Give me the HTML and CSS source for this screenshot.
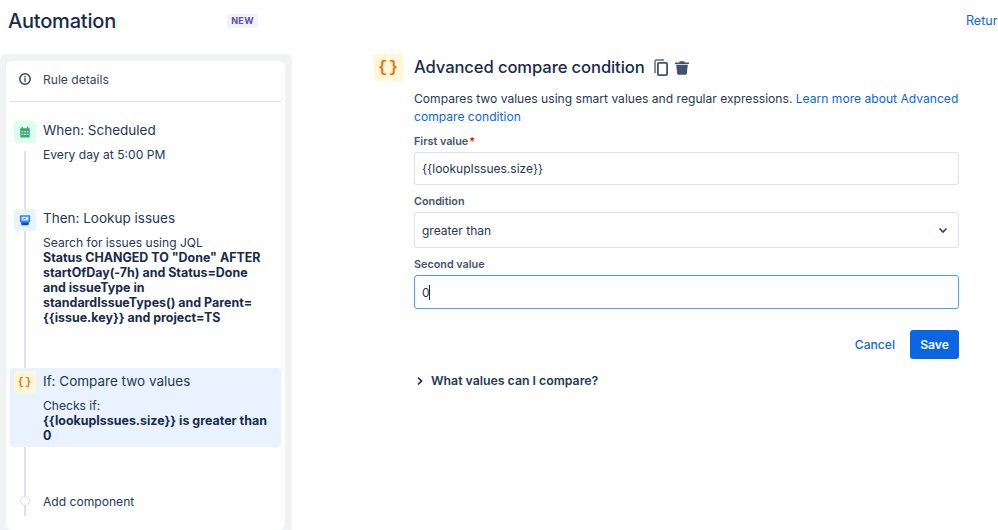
FILE: index.html
```html
<!DOCTYPE html>
<html lang="en">
<head>
<meta charset="utf-8">
<title>Automation</title>
<link rel="stylesheet" href="styles.css">
</head>
<body>
<div class="page">
  <header class="topbar">
    <h1 class="title">Automation</h1>
    <span class="badge">NEW</span>
    <a class="return-link">Return to list</a>
  </header>
  <div class="columns">
    <aside class="panel">
      <div class="card">
        <div class="details">
          <svg class="info" viewBox="0 0 14 14"><circle cx="7" cy="7" r="5.2" fill="none" stroke="#344563" stroke-width="1.5"/><rect x="6.3" y="6.2" width="1.4" height="3.6" fill="#344563"/><rect x="6.3" y="4" width="1.4" height="1.4" fill="#344563"/></svg>
          <span>Rule details</span>
        </div>
        <div class="steps">
          <span class="connector"></span>
          <div class="step step-when">
            <span class="tile tile-green">
              <svg viewBox="0 0 14 14" class="tile-icon"><path d="M1.500 2.500h11v10a1 1 0 0 1-1 1h-9a1 1 0 0 1-1-1z" fill="#36a876"/><rect x="3" y="1" width="1.600" height="2" fill="#36a876"/><rect x="9.400" y="1" width="1.600" height="2" fill="#36a876"/><path d="M3 6h2v1.400H3zM6 6h2v1.400H6zM9 6h2v1.400H9zM3 9h2v1.400H3zM6 9h2v1.400H6zM9 9h2v1.400H9z" fill="#d8f5e6"/></svg>
            </span>
            <div class="step-body">
              <div class="step-title">When: Scheduled</div>
              <div class="step-text">Every day at 5:00 PM</div>
            </div>
          </div>
          <div class="step step-then">
            <span class="tile tile-blue">
              <svg viewBox="0 0 14 14" class="tile-icon"><rect x="1" y="1.500" width="12" height="8" rx="1" fill="#2684ff"/><rect x="3" y="3.200" width="8" height="4.400" fill="#deebff"/><path d="M4.500 6l4-1.500" stroke="#2684ff" stroke-width="1"/><path d="M2.200 9.500h9.600L11 13H3z" fill="#0052cc"/></svg>
            </span>
            <div class="step-body">
              <div class="step-title">Then: Lookup issues</div>
              <div class="step-text">Search for issues using JQL<br><strong>Status CHANGED TO "Done" AFTER startOfDay(-7h) and Status=Done and issueType in standardIssueTypes() and Parent= {{issue.key}} and project=TS</strong></div>
            </div>
          </div>
          <div class="step step-if">
            <span class="tile tile-yellow tile-braces">{}</span>
            <div class="step-body">
              <div class="step-title">If: Compare two values</div>
              <div class="step-text">Checks if:<br><strong>{{lookupIssues.size}} is greater than 0</strong></div>
            </div>
          </div>
          <div class="step step-add">
            <span class="dot"></span>
            <span class="add-label">Add component</span>
          </div>
        </div>
      </div>
    </aside>
    <main class="content">
      <div class="heading">
        <span class="big-tile">{}</span>
        <h2 class="heading-text">Advanced compare condition</h2>
        <svg class="act act-copy" viewBox="0 0 14 17"><path d="M1 14V2.500A1.500 1.500 0 0 1 2.500 1H10" fill="none" stroke="#5e6c84" stroke-width="1.500"/><rect x="3.900" y="3.900" width="9.200" height="12.200" rx="1" fill="none" stroke="#42526e" stroke-width="1.800"/></svg>
        <svg class="act act-trash" viewBox="0 0 14 14"><path d="M0 1.600h14v1.400H0zM4.500 .3h5v1.300h-5z" fill="#42526e"/><path d="M1.200 3.800h11.600l-1 9a1.200 1.200 0 0 1-1.200 1H3.400a1.200 1.200 0 0 1-1.200-1z" fill="#42526e"/></svg>
      </div>
      <p class="desc">Compares two values using smart values and regular expressions. <a class="link">Learn more about Advanced compare condition</a></p>
      <label class="field-label label-first">First value<span class="req">*</span></label>
      <div class="input">{{lookupIssues.size}}</div>
      <label class="field-label">Condition</label>
      <div class="input select"><span>greater than</span>
        <svg class="chev" viewBox="0 0 10 10"><path d="M1.500 3.500L5 7l3.500-3.500" fill="none" stroke="#344563" stroke-width="1.700"/></svg>
      </div>
      <label class="field-label">Second value</label>
      <div class="input focused"><span>0</span><span class="caret"></span></div>
      <div class="actions">
        <a class="cancel">Cancel</a>
        <button class="save" type="button">Save</button>
      </div>
      <div class="expander">
        <svg class="expander-icon" viewBox="0 0 10 10"><path d="M3 1.500L6.500 5 3 8.500" fill="none" stroke="#172b4d" stroke-width="1.700"/></svg>
        <span>What values can I compare?</span>
      </div>
    </main>
  </div>
</div>
</body>
</html>
```
FILE: styles.css
```css
* { box-sizing: border-box; }
html, body { margin: 0; height: 100%; overflow: hidden; background: #fff; }
body { font-family: Inter, "Liberation Sans", sans-serif; color: #172b4d; font-size: 12.100px; }
.page { width: 998px; height: 530px; display: flex; flex-direction: column; overflow: hidden; }
.topbar { height: 54px; flex: none; display: flex; align-items: flex-start; padding: 8px 0 0 8px; white-space: nowrap; overflow: hidden; }
.title { margin: 0; font-size: 20px; line-height: 26px; font-weight: 500; color: #172b4d; width: 219px; letter-spacing: -0.2px; }
.badge { margin-top: 6px; width: 31px; text-align: center; background: #f3f0ff; color: #5e4db2; font-size: 9px; font-weight: 700; line-height: 14px; border-radius: 3px; letter-spacing: .3px; }
.return-link { margin-left: auto; margin-right: -61px; margin-top: 5px; color: #0c66e4; font-size: 12.500px; line-height: 16px; width: 93px; }
.columns { flex: 1; display: flex; min-height: 0; }
.panel { width: 292px; flex: none; background: #f1f2f4; border-radius: 6px 6px 0 0; padding: 7px 7px 0 6px; }
.card { background: #fff; border-radius: 6px; height: 469px; padding: 0 4px; }
.details { height: 41px; display: flex; align-items: center; border-bottom: 1px solid #dfe1e6; padding: 0 0 4px 8px; gap: 11px; color: #344563; }
.info { width: 14px; height: 14px; flex: none; }
.steps { position: relative; height: 420px; }
.connector { position: absolute; left: 14px; top: 30px; width: 2px; height: 365px; background: #dfe1e6; }
.step { position: relative; display: flex; gap: 7px; padding-left: 4px; }
.tile { width: 22px; height: 22px; border-radius: 3px; flex: none; display: flex; align-items: center; justify-content: center; }
.tile-green { background: #dcfff1; }
.tile-blue { background: #e9f2ff; }
.tile-yellow { background: #fff7d6; }
.tile-icon { width: 12px; height: 12px; }
.tile-braces { color: #e8721c; font-family: "Liberation Mono", monospace; font-size: 10.500px; font-weight: 700; letter-spacing: 1px; }
.step-body { margin-top: -2px; }
.step-title { font-size: 13.500px; line-height: 22px; color: #253858; }
.step-text { line-height: 15px; margin-top: 6px; color: #253858; }
.step-text strong { font-size: 12.450px; font-weight: 700; color: #172b4d; }
.step-when { margin-top: 19px; height: 88px; }
.step-then { height: 159px; }
.step-then .step-body, .step-if .step-body { width: 228px; }
.step-if { height: 79px; background: #e9f2ff; border-radius: 4px; padding-top: 3px; }
.step-if .step-body { margin-top: -1px; }
.step-add { margin-top: 44px; align-items: center; height: 20px; gap: 13px; padding-left: 10px; }
.dot { width: 10px; height: 10px; border-radius: 50%; background: #fff; border: 1px solid #dfe1e6; flex: none; }
.add-label { color: #253858; }
.content { flex: none; width: 585px; margin-left: 82px; }
.heading { display: flex; align-items: center; height: 27px; }
.big-tile { width: 29px; height: 27px; background: #fff7d6; border-radius: 3px; color: #e8721c; font-family: "Liberation Mono", monospace; font-size: 16px; font-weight: 700; display: flex; align-items: center; justify-content: center; letter-spacing: 1px; }
.heading-text { margin: 0 0 0 11px; font-size: 16.600px; font-weight: 500; line-height: 27px; color: #172b4d; letter-spacing: -0.1px; }
.act { flex: none; }
.act-copy { width: 14px; height: 17px; margin-left: 9px; }
.act-trash { width: 14px; height: 14px; margin-left: 7px; }
.desc { margin: 9px 0 0 40px; width: 545px; line-height: 18px; color: #253858; }
.link { color: #0c66e4; }
.field-label { display: block; margin: 10px 0 0 40px; font-size: 10.800px; line-height: 14px; font-weight: 600; color: #44546f; }
.label-first { margin-top: 9px; }
.req { color: #bf2600; margin-left: 1px; }
.input { margin: 3px 0 0 40px; width: 545px; height: 33px; border: 1px solid #dfe1e6; border-radius: 3px; background: #fff; display: flex; align-items: center; padding: 0 7px; font-size: 12px; color: #253858; }
.select { height: 36px; justify-content: space-between; padding-right: 10px; }
.chev { width: 10px; height: 10px; }
.focused { border: 1.500px solid #4c9aff; height: 34px; }
.caret { width: 1px; height: 15px; background: #172b4d; margin-left: -1px; }
.actions { margin: 21px 0 0 40px; width: 545px; display: flex; justify-content: flex-end; align-items: center; gap: 15px; }
.cancel { color: #0c66e4; font-weight: 500; }
.save { width: 49px; height: 29px; background: #0c66e4; color: #fff; border: 0; border-radius: 3px; font: 600 12.100px Inter, "Liberation Sans", sans-serif; padding: 0; }
.expander { margin: 14px 0 0 41px; display: flex; align-items: center; gap: 6px; font-size: 12.300px; font-weight: 600; color: #253858; line-height: 16px; }
.expander-icon { width: 10px; height: 10px; }
```
